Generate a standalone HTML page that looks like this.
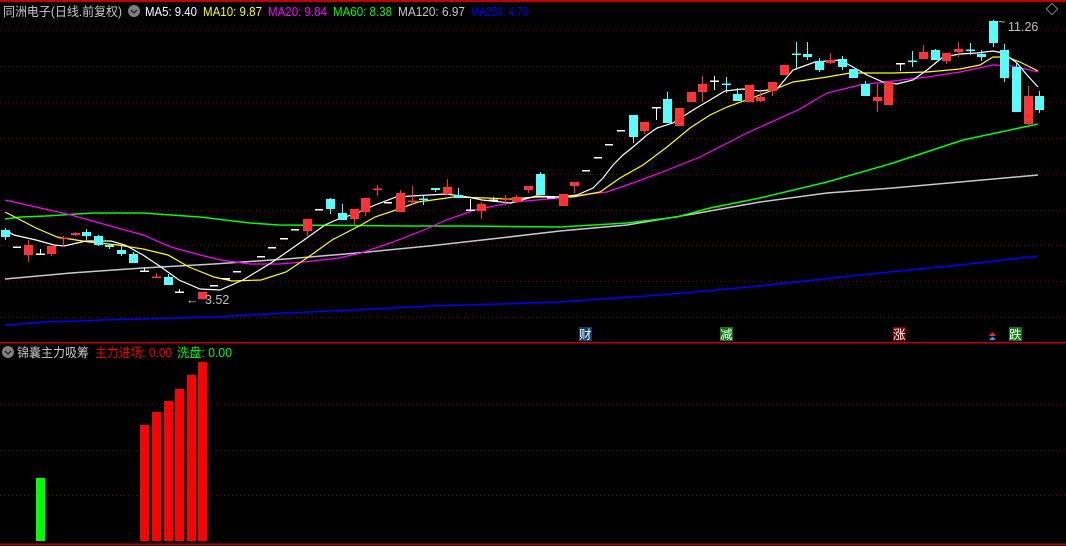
<!DOCTYPE html>
<html><head><meta charset="utf-8"><style>
html,body{margin:0;padding:0;background:#000;width:1066px;height:546px;overflow:hidden}
svg{display:block}
text{font-family:"Liberation Sans","Noto Sans CJK SC",sans-serif;font-size:12.5px}
</style></head><body>
<svg width="1066" height="546" viewBox="0 0 1066 546" xmlns="http://www.w3.org/2000/svg">
<rect width="1066" height="546" fill="#000"/>
<rect x="0" y="0" width="1066" height="2" fill="#c00000"/>
<g stroke="#8a0000" stroke-width="1" stroke-dasharray="1,3">
<line x1="0" y1="30.5" x2="1066" y2="30.5"/><line x1="0" y1="66.5" x2="1066" y2="66.5"/>
<line x1="0" y1="102.5" x2="1066" y2="102.5"/><line x1="0" y1="138.5" x2="1066" y2="138.5"/>
<line x1="0" y1="174.5" x2="1066" y2="174.5"/><line x1="0" y1="210.5" x2="1066" y2="210.5"/>
<line x1="0" y1="245.5" x2="1066" y2="245.5"/><line x1="0" y1="281.5" x2="1066" y2="281.5"/>
<line x1="0" y1="317.5" x2="1066" y2="317.5"/>
<line x1="0" y1="404.5" x2="1066" y2="404.5"/><line x1="0" y1="450.5" x2="1066" y2="450.5"/>
<line x1="0" y1="495.5" x2="1066" y2="495.5"/>
</g>
<g fill="none" stroke-width="1.2">
<polyline stroke="#0000ff" stroke-width="1.6" points="5,325 21,324 45,322 81,321 103,320 139,319 214,317 286,313 357,310 429,306 500,304 560,302 660,295 760,286 860,275 960,265 1038,256"/>
<polyline stroke="#c8c8c8" stroke-width="1.5" points="5,279 71,273 143,268 214,264 286,259 357,253 429,246 500,238 560,231 627,225 693,214 760,202 827,193 893,188 960,182 1038,175"/>
<polyline stroke="#00ff00" stroke-width="1.5" points="5,219 21,217 46,216 93,213 143,213 200,217 250,223 279,225 407,226 464,226 560,227 627,223 677,217 710,208 760,198 827,182 893,163 963,140 1038,124"/>
<polyline stroke="#ff00ff" points="5,200 36,207 71,215 107,225 143,235 171,247 200,255 221,260 250,264 279,264 304,262 339,258 361,253 393,242 429,228 446,220 475,210 514,202 560,198 580,195 607,192 627,185 660,173 700,157 747,133 800,109 827,93 860,85 893,81 927,77 960,72 993,65 1013,66 1038,72"/>
<polyline stroke="#ffff00" points="5,212 11,215 36,228 57,237 89,242 118,245 143,249 168,255 189,267 214,277 232,281 261,280 286,272 307,258 332,240 361,225 375,217 396,210 418,202 454,197 486,198 511,199 536,197 573,197 600,192 620,178 643,165 667,147 690,128 710,115 727,107 760,95 793,82 827,77 850,73 893,73 927,72 960,69 980,65 993,57 1007,57 1020,62 1038,71"/>
<polyline stroke="#ffffff" points="5,230 14,235 36,240 54,245 64,246 86,241 111,241 125,245 143,255 161,267 179,280 200,289 220,290 243,280 271,263 304,240 325,225 336,220 357,213 375,205 396,197 411,196 446,194 468,197 482,200 511,203 536,196 560,197 577,195 593,188 603,178 613,165 623,155 633,147 647,135 657,128 673,123 693,110 710,100 725,91 743,89 760,91 777,89 793,70 815,62 840,60 853,67 867,75 883,82 897,84 913,80 927,70 943,57 960,54 977,53 993,51 1003,53 1017,63 1027,75 1038,87"/>
</g>
<g stroke-width="1">
<g fill="#55ffff" stroke="#55ffff">
<line x1="5.5" y1="228" x2="5.5" y2="240"/><rect x="1" y="230" width="9" height="7" stroke="none"/>
<line x1="86.5" y1="229" x2="86.5" y2="240"/><rect x="82" y="232" width="9" height="4" stroke="none"/>
<line x1="98.5" y1="235" x2="98.5" y2="246"/><rect x="94" y="236" width="9" height="9" stroke="none"/>
<line x1="109.5" y1="244" x2="109.5" y2="249"/><rect x="105" y="245" width="9" height="2" stroke="none"/>
<line x1="121.5" y1="246" x2="121.5" y2="256"/><rect x="117" y="250" width="9" height="4" stroke="none"/>
<line x1="133.5" y1="252" x2="133.5" y2="263"/><rect x="129" y="254" width="9" height="9" stroke="none"/>
<line x1="168.5" y1="274" x2="168.5" y2="285"/><rect x="164" y="277" width="9" height="8" stroke="none"/>
<line x1="330.5" y1="198" x2="330.5" y2="214"/><rect x="326" y="199" width="9" height="10" stroke="none"/>
<line x1="342.5" y1="204" x2="342.5" y2="220"/><rect x="338" y="213" width="9" height="7" stroke="none"/>
<line x1="423.5" y1="195" x2="423.5" y2="205"/><rect x="419" y="198.5" width="9" height="1.5" stroke="none"/>
<line x1="435.5" y1="188" x2="435.5" y2="192"/><rect x="431" y="188" width="9" height="2" stroke="none"/>
<line x1="458.5" y1="188" x2="458.5" y2="198"/><rect x="454" y="195" width="9" height="3" stroke="none"/>
<line x1="540.5" y1="172" x2="540.5" y2="195"/><rect x="536" y="174" width="9" height="21" stroke="none"/>
<line x1="633.5" y1="115" x2="633.5" y2="143"/><rect x="629" y="115" width="9" height="22" stroke="none"/>
<line x1="667.5" y1="92" x2="667.5" y2="123"/><rect x="663" y="99" width="9" height="24" stroke="none"/>
<line x1="726.5" y1="77" x2="726.5" y2="93"/><rect x="722" y="83.5" width="9" height="1.5" stroke="none"/>
<line x1="737.5" y1="88" x2="737.5" y2="101"/><rect x="733" y="94" width="9" height="7" stroke="none"/>
<line x1="796.5" y1="42" x2="796.5" y2="70"/><rect x="792" y="53.5" width="9" height="1.5" stroke="none"/>
<line x1="807.5" y1="42" x2="807.5" y2="60"/><rect x="803" y="54" width="9" height="3" stroke="none"/>
<line x1="819.5" y1="58" x2="819.5" y2="72"/><rect x="815" y="61" width="9" height="9" stroke="none"/>
<line x1="842.5" y1="56" x2="842.5" y2="70"/><rect x="838" y="59" width="9" height="8" stroke="none"/>
<rect x="849" y="69" width="9" height="9" stroke="none"/>
<line x1="865.5" y1="81" x2="865.5" y2="96"/><rect x="861" y="84" width="9" height="12" stroke="none"/>
<line x1="912.5" y1="51" x2="912.5" y2="67"/><rect x="908" y="60.5" width="9" height="1.5" stroke="none"/>
<line x1="935.5" y1="49" x2="935.5" y2="60"/><rect x="931" y="50" width="9" height="10" stroke="none"/>
<line x1="970.5" y1="43" x2="970.5" y2="55"/><rect x="966" y="49.5" width="9" height="1.5" stroke="none"/>
<line x1="981.5" y1="50" x2="981.5" y2="61"/><rect x="977" y="54" width="9" height="3" stroke="none"/>
<line x1="993.5" y1="20" x2="993.5" y2="47"/><rect x="989" y="21" width="9" height="22" stroke="none"/>
<line x1="1004.5" y1="44" x2="1004.5" y2="82"/><rect x="1000" y="50" width="9" height="28" stroke="none"/>
<line x1="1016.5" y1="62" x2="1016.5" y2="112"/><rect x="1012" y="67" width="9" height="45" stroke="none"/>
<line x1="1039.5" y1="91" x2="1039.5" y2="113"/><rect x="1035" y="96" width="9" height="14" stroke="none"/>
</g>
<g fill="#ff3333" stroke="#ff3333">
<line x1="28.5" y1="240" x2="28.5" y2="262"/><rect x="24" y="245" width="9" height="10" stroke="none"/>
<line x1="51.5" y1="246" x2="51.5" y2="256"/><rect x="47" y="246" width="9" height="8" stroke="none"/>
<line x1="63.5" y1="236" x2="63.5" y2="247"/><rect x="59" y="237.5" width="9" height="1.5" stroke="none"/>
<line x1="75.5" y1="232" x2="75.5" y2="236"/><rect x="71" y="233" width="9" height="2" stroke="none"/>
<line x1="156.5" y1="273" x2="156.5" y2="277"/><rect x="152" y="276.5" width="9" height="1.5" stroke="none"/>
<rect x="198" y="292" width="9" height="7" stroke="none"/>
<line x1="307.5" y1="219" x2="307.5" y2="236"/><rect x="303" y="219" width="9" height="12" stroke="none"/>
<line x1="354.5" y1="209" x2="354.5" y2="225"/><rect x="350" y="209" width="9" height="10" stroke="none"/>
<line x1="365.5" y1="198" x2="365.5" y2="216"/><rect x="361" y="198" width="9" height="14" stroke="none"/>
<line x1="377.5" y1="185" x2="377.5" y2="196"/><rect x="373" y="188.5" width="9" height="1.5" stroke="none"/>
<line x1="400.5" y1="190" x2="400.5" y2="212"/><rect x="396" y="193" width="9" height="19" stroke="none"/>
<line x1="412.5" y1="186" x2="412.5" y2="205"/><rect x="408" y="200.5" width="9" height="1.5" stroke="none"/>
<line x1="447.5" y1="179" x2="447.5" y2="195"/><rect x="443" y="187" width="9" height="7" stroke="none"/>
<line x1="481.5" y1="202" x2="481.5" y2="219"/><rect x="477" y="204" width="9" height="7" stroke="none"/>
<line x1="505.5" y1="195" x2="505.5" y2="205"/><rect x="501" y="198.5" width="9" height="1.5" stroke="none"/>
<line x1="516.5" y1="195" x2="516.5" y2="203"/><rect x="512" y="197" width="9" height="5" stroke="none"/>
<line x1="528.5" y1="186" x2="528.5" y2="193"/><rect x="524" y="186" width="9" height="4" stroke="none"/>
<rect x="559" y="194" width="9" height="12" stroke="none"/>
<line x1="574.5" y1="182" x2="574.5" y2="193"/><rect x="570" y="182" width="9" height="4" stroke="none"/>
<line x1="644.5" y1="122" x2="644.5" y2="134"/><rect x="640" y="122" width="9" height="9" stroke="none"/>
<rect x="675" y="108" width="9" height="18" stroke="none"/>
<rect x="687" y="92" width="9" height="10" stroke="none"/>
<line x1="702.5" y1="76" x2="702.5" y2="102"/><rect x="698" y="84" width="9" height="8" stroke="none"/>
<rect x="745" y="85" width="9" height="17" stroke="none"/>
<line x1="760.5" y1="91" x2="760.5" y2="102"/><rect x="756" y="97" width="9" height="4" stroke="none"/>
<line x1="772.5" y1="82" x2="772.5" y2="96"/><rect x="768" y="82" width="9" height="9" stroke="none"/>
<rect x="780" y="65" width="9" height="10" stroke="none"/>
<line x1="830.5" y1="53" x2="830.5" y2="64"/><rect x="826" y="60" width="9" height="3" stroke="none"/>
<line x1="877.5" y1="84" x2="877.5" y2="112"/><rect x="873" y="97" width="9" height="4" stroke="none"/>
<rect x="884" y="82" width="9" height="23" stroke="none"/>
<line x1="923.5" y1="45" x2="923.5" y2="59"/><rect x="919" y="52" width="9" height="7" stroke="none"/>
<line x1="946.5" y1="53" x2="946.5" y2="64"/><rect x="942" y="53" width="9" height="8" stroke="none"/>
<line x1="958.5" y1="42" x2="958.5" y2="57"/><rect x="954" y="49" width="9" height="3" stroke="none"/>
<line x1="1028.5" y1="86" x2="1028.5" y2="126"/><rect x="1024" y="96" width="9" height="28" stroke="none"/>
</g>
<g fill="#ffffff" stroke="#ffffff">
<rect x="13" y="246.5" width="8" height="1.5" stroke="none"/>
<line x1="40.5" y1="249" x2="40.5" y2="254"/><rect x="36" y="253.5" width="9" height="1.5" stroke="none"/>
<line x1="144.5" y1="268" x2="144.5" y2="271"/><rect x="140" y="270.5" width="9" height="1.5" stroke="none"/>
<line x1="179.5" y1="289" x2="179.5" y2="292"/><rect x="175" y="291.5" width="9" height="1.5" stroke="none"/>
<rect x="210" y="285" width="8" height="1.5" stroke="none"/>
<rect x="222" y="278" width="8" height="1.5" stroke="none"/>
<rect x="233" y="271" width="8" height="1.5" stroke="none"/>
<rect x="257" y="256" width="8" height="1.5" stroke="none"/>
<rect x="268" y="247" width="8" height="1.5" stroke="none"/>
<rect x="280" y="238" width="8" height="1.5" stroke="none"/>
<rect x="291" y="229" width="8" height="1.5" stroke="none"/>
<rect x="315" y="209" width="8" height="1.5" stroke="none"/>
<rect x="384" y="202" width="8" height="1.5" stroke="none"/>
<line x1="470.5" y1="199" x2="470.5" y2="210"/><rect x="466" y="209.5" width="9" height="1.5" stroke="none"/>
<line x1="493.5" y1="197" x2="493.5" y2="202"/><rect x="489" y="199.5" width="9" height="1.5" stroke="none"/>
<rect x="547" y="197" width="8" height="1.5" stroke="none"/>
<rect x="582" y="170" width="8" height="1.5" stroke="none"/>
<rect x="594" y="157" width="8" height="1.5" stroke="none"/>
<rect x="605" y="144" width="8" height="1.5" stroke="none"/>
<rect x="617" y="130" width="8" height="1.5" stroke="none"/>
<line x1="656.5" y1="107" x2="656.5" y2="120"/><rect x="652" y="107" width="9" height="1.5" stroke="none"/>
<line x1="714.5" y1="76" x2="714.5" y2="90"/><rect x="710" y="80.5" width="9" height="1.5" stroke="none"/>
<line x1="900.5" y1="63" x2="900.5" y2="71"/><rect x="896" y="63" width="9" height="1.5" stroke="none"/>
</g>
</g>
<text x="186" y="304" fill="#c0c0c0" font-size="11">←</text>
<text x="205" y="304" fill="#c0c0c0" font-size="12">3.52</text>
<text x="998" y="26" fill="#c0c0c0" font-size="10">~</text>
<text x="1008" y="31" fill="#c0c0c0" font-size="12">11.26</text>
<rect x="1048" y="5" width="8" height="8" fill="none" stroke="#808080" transform="rotate(45 1052 9)"/>
<text x="3" y="16" fill="#c8c8c8" textLength="119" lengthAdjust="spacingAndGlyphs">同洲电子(日线.前复权)</text>
<circle cx="134" cy="11" r="6" fill="#808080"/>
<path d="M131 10 L134 13 L137 10" stroke="#222" stroke-width="1.3" fill="none"/>
<text x="145" y="16" fill="#ffffff" textLength="52" lengthAdjust="spacingAndGlyphs">MA5: 9.40</text>
<text x="203" y="16" fill="#ffff00" textLength="59" lengthAdjust="spacingAndGlyphs">MA10: 9.87</text>
<text x="268" y="16" fill="#ff00ff" textLength="59" lengthAdjust="spacingAndGlyphs">MA20: 9.84</text>
<text x="333" y="16" fill="#00ff00" textLength="59" lengthAdjust="spacingAndGlyphs">MA60: 8.38</text>
<text x="398" y="16" fill="#c8c8c8" textLength="67" lengthAdjust="spacingAndGlyphs">MA120: 6.97</text>
<text x="471" y="16" fill="#0000ff" textLength="57" lengthAdjust="spacingAndGlyphs">MA250: 4.70</text>
<rect x="579" y="327" width="13" height="14" fill="#0d3d6e"/><text x="579" y="339" fill="#fff" font-size="12">财</text>
<rect x="720" y="327" width="13" height="14" fill="#0a7a0a"/><text x="720" y="339" fill="#fff" font-size="12">减</text>
<rect x="893" y="327" width="13" height="14" fill="#7a0000"/><text x="893" y="339" fill="#fff" font-size="12">涨</text>
<path d="M989 336 L992.5 332 L996 336 Z" fill="#ff2020"/><path d="M989 340 L992.5 336.5 L996 340 Z" fill="#20a0ff"/>
<rect x="1009" y="327" width="13" height="14" fill="#0a7a0a"/><text x="1009" y="339" fill="#fff" font-size="12">跌</text>
<rect x="0" y="342" width="1066" height="1.5" fill="#c00000"/>
<rect x="0" y="543.5" width="1066" height="1.5" fill="#c00000"/>
<circle cx="8" cy="352" r="6" fill="#808080"/>
<path d="M5 351 L8 354 L11 351" stroke="#222" stroke-width="1.3" fill="none"/>
<text x="17" y="357" fill="#c8c8c8" textLength="72" lengthAdjust="spacingAndGlyphs">锦囊主力吸筹</text>
<text x="95" y="357" fill="#ff0000" textLength="77" lengthAdjust="spacingAndGlyphs">主力进场: 0.00</text>
<text x="177" y="357" fill="#00ff00" textLength="55" lengthAdjust="spacingAndGlyphs">洗盘: 0.00</text>
<rect x="36" y="478" width="9" height="63" fill="#00ff00"/>
<rect x="140" y="425" width="9" height="116" fill="#ff0000"/>
<rect x="152" y="412" width="9" height="129" fill="#ff0000"/>
<rect x="164" y="401" width="9" height="140" fill="#ff0000"/>
<rect x="175" y="389" width="9" height="152" fill="#ff0000"/>
<rect x="187" y="375" width="9" height="166" fill="#ff0000"/>
<rect x="198" y="362" width="9" height="179" fill="#ff0000"/>
</svg>
</body></html>
